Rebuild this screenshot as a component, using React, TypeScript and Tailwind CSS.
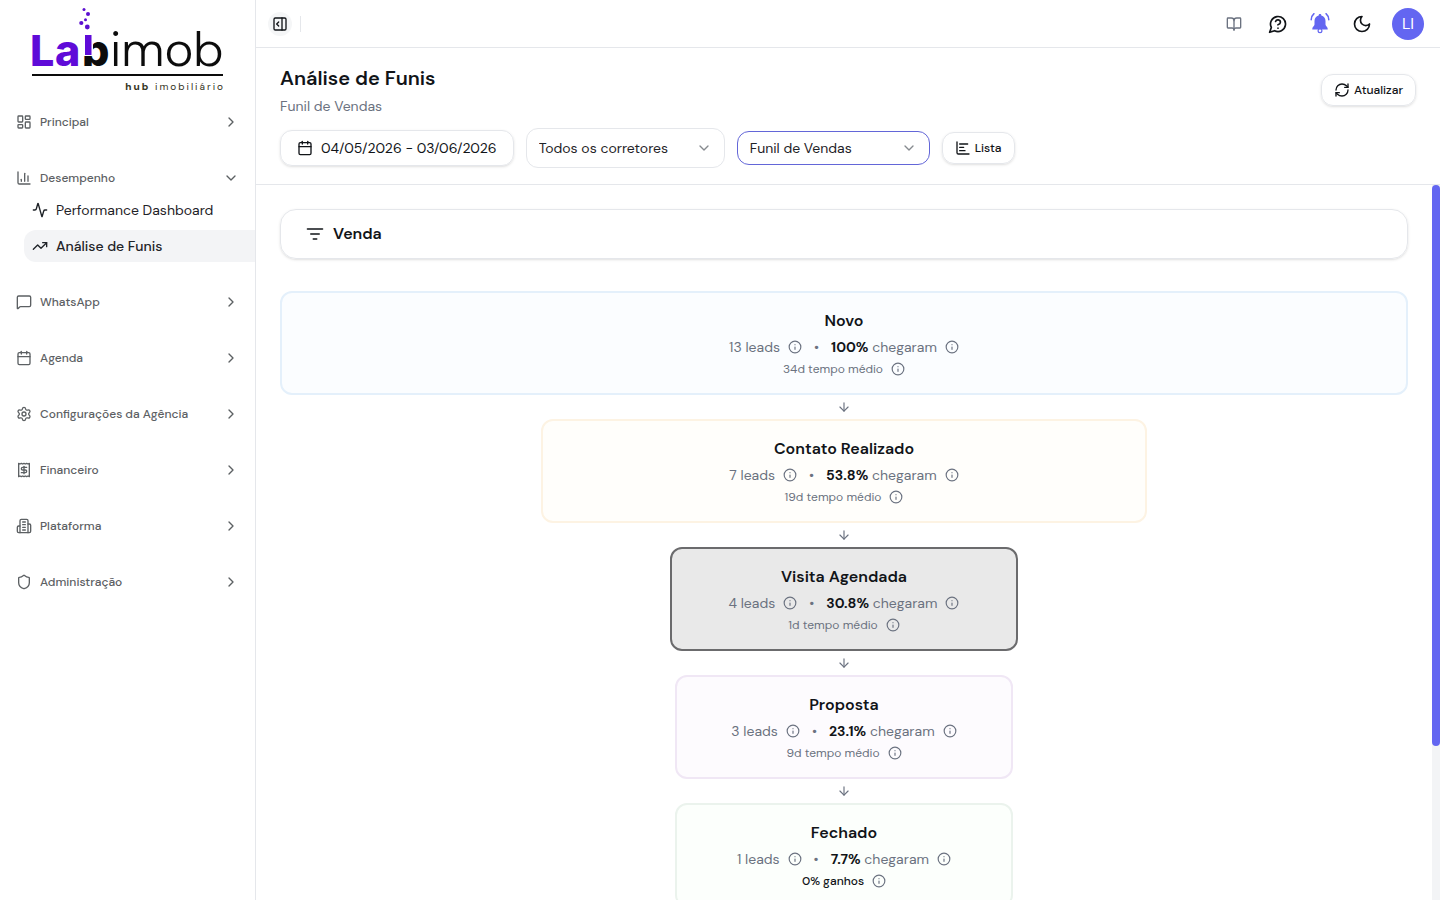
import { type ReactNode } from "react";
import {
  Activity,
  ArrowDown,
  BookOpen,
  Calendar,
  ChartColumn,
  ChevronDown,
  ChevronRight,
  Info,
  LayoutDashboard,
  MessageSquare,
  RefreshCw,
  Settings,
  Shield,
  TrendingUp,
} from "lucide-react";

function Logo() {
  return (
    <svg viewBox="0 0 200 92" className="h-[92px] w-[200px]" role="img" aria-label="Labimob hub imobiliário">
      <g fill="#5b0fd0">
        <circle cx="56" cy="9.500" r="1.500" />
        <circle cx="60" cy="14" r="2" />
        <circle cx="57.500" cy="19.700" r="1.500" />
        <circle cx="53.300" cy="23" r="2.100" />
        <circle cx="59.300" cy="27" r="2.400" />
      </g>
      <g fontFamily="Inter, sans-serif" fontSize="43" fontWeight="800">
        <text x="2" y="66" fill="#5f0bd8">L</text>
        <text x="27" y="66" fill="#5f0bd8">a</text>
        <text x="54" y="66" fill="#0c0c0c">b</text>
      </g>
      <rect x="54" y="30" width="11" height="26" fill="#ffffff" />
      <rect x="57" y="35" width="6.500" height="20" fill="#5f0bd8" />
      <text x="82" y="66" fontFamily="'DM Sans', sans-serif" fontSize="49" fontWeight="300" fill="#0c0c0c">imob</text>
      <rect x="4" y="74" width="191" height="2" fill="#0c0c0c" />
      <text x="197" y="90" textAnchor="end" fontFamily="'DM Sans', sans-serif" fontSize="10" letterSpacing="2" fill="#33331c">
        <tspan fontWeight="800">hub</tspan> imobiliário
      </text>
    </svg>
  );
}

function LineIcon({ children, className = "size-4" }: { children: ReactNode; className?: string }) {
  return (
    <svg viewBox="0 0 24 24" className={className} fill="none" stroke="currentColor" strokeWidth="2" strokeLinecap="round" strokeLinejoin="round" aria-hidden="true">
      {children}
    </svg>
  );
}

function ReceiptIcon() {
  return (
    <LineIcon>
      <path d="M4 2v20l2-1 2 1 2-1 2 1 2-1 2 1 2-1 2 1V2l-2 1-2-1-2 1-2-1-2 1-2-1-2 1Z" />
      <path d="M16 8h-6a2 2 0 1 0 0 4h4a2 2 0 1 1 0 4H8" />
      <path d="M12 17.500v-11" />
    </LineIcon>
  );
}

function BuildingIcon() {
  return (
    <LineIcon>
      <path d="M6 22V4a2 2 0 0 1 2-2h8a2 2 0 0 1 2 2v18Z" />
      <path d="M6 12H4a2 2 0 0 0-2 2v6a2 2 0 0 0 2 2h2" />
      <path d="M18 9h2a2 2 0 0 1 2 2v9a2 2 0 0 1-2 2h-2" />
      <path d="M10 6h4M10 10h4M10 14h4M10 18h4" />
    </LineIcon>
  );
}

function PanelIcon() {
  return (
    <LineIcon>
      <rect x="3" y="3" width="18" height="18" rx="2" />
      <path d="M15 3v18M10 15l-3-3 3-3" />
    </LineIcon>
  );
}

function HelpIcon() {
  return (
    <LineIcon className="size-5">
      <path d="M7.900 20A9 9 0 1 0 4 16.100L2 22Z" />
      <path d="M9.090 9a3 3 0 0 1 5.830 1c0 2-3 3-3 3" />
      <path d="M12 17h.01" />
    </LineIcon>
  );
}

function MoonIcon() {
  return (
    <LineIcon className="size-5">
      <path d="M12 3a6 6 0 0 0 9 9 9 9 0 1 1-9-9Z" />
    </LineIcon>
  );
}

function BellIcon() {
  return (
    <svg viewBox="0 0 24 24" className="size-6" fill="#6366f1" aria-hidden="true">
      <path d="M12 2c.8 0 1.300.5 1.300 1.200v.3c2.600.6 4.200 2.700 4.200 5.400v3.600c0 1.500 2.200 2.600 2.200 4.200v.7H4.300v-.7c0-1.600 2.200-2.700 2.200-4.200V8.900c0-2.700 1.600-4.800 4.200-5.400v-.3C10.700 2.500 11.200 2 12 2Z" />
      <circle cx="12" cy="18.800" r="1.900" fill="#ffffff" stroke="#6366f1" strokeWidth="1.200" />
      <path d="M3.200 7.800C3.300 5.300 4.200 3.200 6 1.700M20.800 7.800c-.1-2.500-1-4.600-2.800-6.100" fill="none" stroke="#6366f1" strokeWidth="1.500" strokeLinecap="round" />
    </svg>
  );
}

function ListIcon() {
  return (
    <LineIcon>
      <path d="M3 3v16a2 2 0 0 0 2 2h16M7 16h8M7 11h6M7 6h12" />
    </LineIcon>
  );
}

function Section({ icon, label, open = false }: { icon: ReactNode; label: string; open?: boolean }) {
  return (
    <button type="button" aria-expanded={open} className="flex h-8 w-full items-center gap-2 px-4 text-xs font-medium text-[#5c6063]">
      {icon}
      <span className="flex-1 text-left">{label}</span>
      {open ? <ChevronDown className="size-4" /> : <ChevronRight className="size-4" />}
    </button>
  );
}

const ic = "size-4";

function Sidebar() {
  return (
    <aside className="flex w-64 shrink-0 flex-col border-r border-[#e5e7eb] bg-white">
      <div className="flex h-[106px] justify-center">
        <Logo />
      </div>
      <nav className="flex flex-col gap-6">
        <Section icon={<LayoutDashboard className={ic} />} label="Principal" />
        <div>
          <Section icon={<ChartColumn className={ic} />} label="Desempenho" open />
          <div className="flex flex-col gap-1 pl-6 text-sm text-[#1f2328]">
            <a href="#performance" className="flex h-8 items-center gap-2 pl-2">
              <Activity className={ic} />
              Performance Dashboard
            </a>
            <a href="#funis" className="flex h-8 items-center gap-2 rounded-l-xl bg-[#f3f4f6] pl-2 font-medium">
              <TrendingUp className={ic} />
              Análise de Funis
            </a>
          </div>
        </div>
        <Section icon={<MessageSquare className={ic} />} label="WhatsApp" />
        <Section icon={<Calendar className={ic} />} label="Agenda" />
        <Section icon={<Settings className={ic} />} label="Configurações da Agência" />
        <Section icon={<ReceiptIcon />} label="Financeiro" />
        <Section icon={<BuildingIcon />} label="Plataforma" />
        <Section icon={<Shield className={ic} />} label="Administração" />
      </nav>
    </aside>
  );
}

function Picker({ label, options, box }: { label: string; options: string[]; box: string }) {
  return (
    <div className={"relative " + box}>
      <select aria-label={label} className="h-full w-full appearance-none bg-transparent pl-3 pr-9 text-sm text-[#1f2328] outline-none">
        {options.map((o) => (
          <option key={o}>{o}</option>
        ))}
      </select>
      <ChevronDown className="pointer-events-none absolute inset-y-0 right-3 my-auto size-4 text-[#868a8f]" />
    </div>
  );
}

type Stage = {
  name: string;
  leads: number;
  pct: string;
  note: string;
  strong?: boolean;
  box: string;
};

const stages: Stage[] = [
  { name: "Novo", leads: 13, pct: "100%", note: "34d tempo médio", box: "w-full border-[#e4f0fb] bg-[#fbfdff]" },
  { name: "Contato Realizado", leads: 7, pct: "53.8%", note: "19d tempo médio", box: "w-[53.7%] border-[#fdf3e3] bg-[#fffefb]" },
  { name: "Visita Agendada", leads: 4, pct: "30.8%", note: "1d tempo médio", box: "w-[30.8%] border-[#6b6b6d] bg-[#e9e9e9]" },
  { name: "Proposta", leads: 3, pct: "23.1%", note: "9d tempo médio", box: "w-[30%] border-[#f0e7f5] bg-[#fdfbfe]" },
  { name: "Fechado", leads: 1, pct: "7.7%", note: "0% ganhos", strong: true, box: "w-[30%] border-[#ebf3ed] bg-[#fcfffc]" },
];

function InfoButton({ label }: { label: string }) {
  return (
    <button type="button" aria-label={label} className="text-[#6b7280]">
      <Info className="size-[14px]" />
    </button>
  );
}

function StageCard({ stage }: { stage: Stage }) {
  return (
    <section className={"flex flex-col items-center gap-1 rounded-xl border-2 p-4 text-[#6b7280] " + stage.box}>
      <h3 className="text-base font-semibold text-[#111418]">{stage.name}</h3>
      <div className="flex h-5 items-center gap-2 text-sm">
        <span>{stage.leads} leads</span>
        <InfoButton label="Sobre os leads" />
        <span className="px-1">•</span>
        <span>
          <strong className="font-bold text-[#111418]">{stage.pct}</strong> chegaram
        </span>
        <InfoButton label="Sobre a chegada" />
      </div>
      <div className="flex h-4 items-center gap-2 text-xs">
        <span className={stage.strong ? "font-medium text-[#111418]" : ""}>{stage.note}</span>
        <InfoButton label="Sobre o indicador" />
      </div>
    </section>
  );
}

export default function App() {
  return (
    <div className="flex h-screen overflow-hidden bg-white font-['DM_Sans',Inter,sans-serif] text-[#111418]">
      <Sidebar />
      <div className="flex min-w-0 flex-1 flex-col">
        <header className="flex h-12 shrink-0 items-center justify-between border-b border-[#e5e7eb] pl-3 pr-4">
          <div className="flex items-center gap-2">
            <button type="button" aria-label="Recolher menu" className="flex size-6 items-center justify-center rounded-full bg-[#f5f6f7]">
              <PanelIcon />
            </button>
            <span className="h-4 w-px bg-[#e5e7eb]" />
          </div>
          <div className="flex items-center">
            <button type="button" aria-label="Documentação" className="mr-[26px] text-[#6b7280]">
              <BookOpen className="size-4" />
            </button>
            <button type="button" aria-label="Ajuda" className="mr-5">
              <HelpIcon />
            </button>
            <button type="button" aria-label="Notificações" className="mr-5">
              <BellIcon />
            </button>
            <button type="button" aria-label="Tema escuro" className="mr-5">
              <MoonIcon />
            </button>
            <button type="button" aria-label="Conta" className="size-8 rounded-full bg-[#6366f1] text-base text-white">
              LI
            </button>
          </div>
        </header>

        <div className="shrink-0 border-b border-[#e5e7eb] px-6 py-4">
          <div className="flex items-center justify-between">
            <div>
              <h1 className="text-xl font-semibold">Análise de Funis</h1>
              <p className="mt-1 text-sm text-[#6b7280]">Funil de Vendas</p>
            </div>
            <button type="button" className="flex h-8 items-center gap-1 rounded-xl border border-[#e5e7eb] px-3 text-xs font-medium shadow-sm">
              <RefreshCw className="size-4" />
              Atualizar
            </button>
          </div>
          <div className="mt-3 flex h-10 items-center gap-3">
            <button type="button" className="flex h-9 items-center gap-2 rounded-xl border border-[#e5e7eb] px-4 text-sm shadow-sm">
              <Calendar className="size-4" />
              04/05/2026 - 03/06/2026
            </button>
            <Picker label="Corretor" options={["Todos os corretores"]} box="h-10 w-[199px] rounded-xl border border-[#e5e7eb]" />
            <Picker label="Funil" options={["Funil de Vendas"]} box="h-[34px] w-[193px] rounded-xl border border-[#6366d8]" />
            <button type="button" className="flex h-8 items-center gap-1 rounded-xl border border-[#e5e7eb] px-3 text-xs font-medium shadow-sm">
              <ListIcon />
              Lista
            </button>
          </div>
        </div>

        <div className="flex min-h-0 flex-1">
          <main className="min-w-0 flex-1 overflow-hidden p-6">
            <div className="mb-8 flex h-[50px] items-center gap-2 rounded-2xl border border-[#e5e7eb] px-6 shadow-sm">
              <LineIcon className="size-5">
                <path d="M3 6h18M7 12h10M10 18h4" />
              </LineIcon>
              <h2 className="text-base font-semibold">Venda</h2>
            </div>
            <div className="flex flex-col items-center">
              {stages.map((stage, i) => (
                <div key={stage.name} className="flex w-full flex-col items-center">
                  {i > 0 && <ArrowDown className="my-[5px] size-[14px] text-[#6b7280]" />}
                  <StageCard stage={stage} />
                </div>
              ))}
            </div>
          </main>
          <div className="w-2 shrink-0 bg-[#f3f4f6]" aria-hidden="true">
            <div className="h-[78.5%] rounded-full bg-[#6366f1]" />
          </div>
        </div>
      </div>
    </div>
  );
}
